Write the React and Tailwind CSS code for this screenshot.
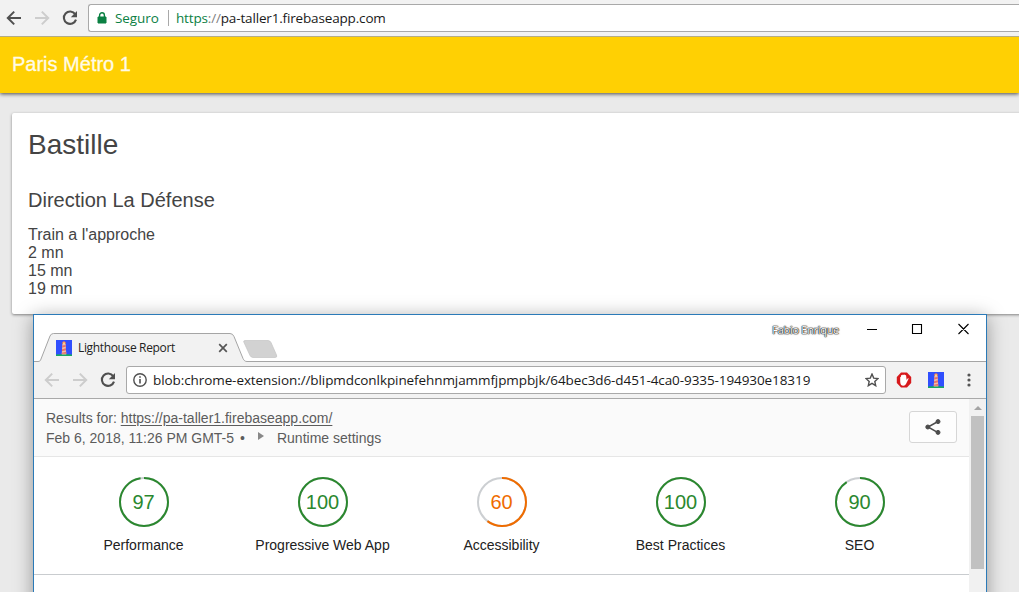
import React from "react";

function BackIcon({ className }) {
  return (
    <svg viewBox="0 0 16 16" className={"h-4 w-4 shrink-0 " + className} fill="none" stroke="currentColor" strokeWidth="2">
      <path d="M15 8H2.5M8.2 1.6L1.8 8l6.4 6.4" />
    </svg>
  );
}

function ForwardIcon({ className }) {
  return (
    <svg viewBox="0 0 16 16" className={"h-4 w-4 shrink-0 " + className} fill="none" stroke="currentColor" strokeWidth="2">
      <path d="M1 8h12.5M7.8 1.6L14.2 8l-6.4 6.4" />
    </svg>
  );
}

function ReloadIcon() {
  return (
    <svg viewBox="0 0 16 16" className="h-4 w-4 shrink-0 text-[#505050]">
      <path d="M13.2 4.1A6.2 6.2 0 1 0 14 9.6" fill="none" stroke="currentColor" strokeWidth="2.1" />
      <path d="M15 1v6.2H8.8z" fill="currentColor" />
    </svg>
  );
}

function LighthouseIcon() {
  return (
    <svg viewBox="0 0 16 16" className="h-4 w-4 shrink-0">
      <path d="M0 0h16v16H0z" fill="#304ffe" />
      <path d="M0 14.6Q8 13.4 16 14.6V16H0z" fill="#16a765" />
      <path d="M6.4 4h3.2l.7 10.4H5.7z" fill="#f0c0a8" />
      <path d="M6.3 5.6l3.4-.6.1 1.8-3.6.8zM6.1 9.2l3.8-1 .2 2-4.2 1zM5.8 12.8l4.4-1.1.2 2H5.7z" fill="#e8706a" />
      <path d="M6.2 2.2L8 1l1.8 1.2V4H6.2z" fill="#e8775c" />
      <path d="M7.1 2.4h1.8V4H7.1z" fill="#ffdf8a" />
    </svg>
  );
}

function Gauge({ score, label, color }) {
  const length = 2 * Math.PI * 24;
  return (
    <div className="flex w-[179px] flex-col items-center">
      <div className="grid h-[50px] w-[50px] place-items-center">
        <svg viewBox="0 0 50 50" className="col-start-1 row-start-1 h-[50px] w-[50px] -rotate-90" fill="none" strokeWidth="2">
          <circle cx="25" cy="25" r="24" stroke="#cccfd2" />
          <circle cx="25" cy="25" r="24" stroke={color} strokeDasharray={`${(length * score) / 100} ${length}`} />
        </svg>
        <span className="col-start-1 row-start-1 text-[20px] leading-[50px]" style={{ color }}>{score}</span>
      </div>
      <div className="mt-2 text-[14px] leading-5 text-[#212121]">{label}</div>
    </div>
  );
}

const gauges = [
  { score: 97, label: "Performance", color: "#2b882f" },
  { score: 100, label: "Progressive Web App", color: "#2b882f" },
  { score: 60, label: "Accessibility", color: "#ef6c00" },
  { score: 100, label: "Best Practices", color: "#2b882f" },
  { score: 90, label: "SEO", color: "#2b882f" },
];

function ReportWindow() {
  return (
    <section className="absolute left-[33px] top-[314px] flex h-[300px] w-[954px] flex-col border border-[#2b7ab8] bg-white shadow-[0_3px_18px_rgba(0,0,0,0.36)]">
      <div className="flex h-[47px] shrink-0 justify-between bg-white">
        <div className="grid h-[47px] w-[260px]">
          <svg viewBox="0 0 260 47" className="col-start-1 row-start-1 h-[47px] w-[260px]">
            <path d="M0 46.5H4C6 46.5 6.5 45.5 7 44L16 21Q17 18.5 19.5 18.5H196Q198.8 18.5 200 21.5L209 43.5C210 45.5 211 46.5 213 46.5H260V47H0z" fill="#f2f2f2" />
            <path d="M0 46.5H4C6 46.5 6.5 45.5 7 44L16 21Q17 18.5 19.5 18.5H196Q198.8 18.5 200 21.5L209 43.5C210 45.5 211 46.5 213 46.5H260" fill="none" stroke="#a5a5a5" />
            <path d="M211 25.5H234Q236 25.5 237 27.5L242.5 40Q243.5 42.5 241 42.5H219Q217 42.5 216 40.5L210 27.5Q209 25.5 211 25.5z" fill="#d2d2d2" stroke="#c4c4c4" strokeWidth=".7" />
          </svg>
          <div className="col-start-1 row-start-1 flex items-center pl-[22px] pt-[19px]">
            <LighthouseIcon />
            <span className="ml-[6px] w-[140px] whitespace-nowrap font-['Open_Sans','Noto_Sans',sans-serif] text-[12px] leading-4 tracking-[-0.35px] text-[#222]">Lighthouse Report</span>
            <svg viewBox="0 0 10 10" className="h-[10px] w-[10px]" stroke="#555" strokeWidth="1.7"><path d="M1.2 1.2l7.6 7.6M8.8 1.2L1.2 8.8" /></svg>
          </div>
        </div>
        <div className="flex grow justify-end border-b border-[#a5a5a5] text-black">
          <span className="mr-[28px] mt-[7px] whitespace-nowrap font-['Open_Sans','Noto_Sans',sans-serif] text-[11px] leading-4 tracking-[-0.3px] text-white [text-shadow:0_0_1px_#111,0_0_1px_#111,0_0_1px_#222,0_0_2px_#777]">Fabio Enrique</span>
          <svg viewBox="0 0 103 12" className="mr-[16px] mt-2 h-3 w-[103px]" fill="none" stroke="currentColor" strokeWidth="1.1">
            <path d="M0 6.5h10M45.5 1.5h9v9h-9zM91.5 1l10 10M101.5 1l-10 10" />
          </svg>
        </div>
      </div>
      <div className="flex h-[37px] shrink-0 items-center border-b border-[#a9a9a9] bg-[#f2f2f2] pl-[10px]">
        <BackIcon className="text-[#cdcdcd]" />
        <ForwardIcon className="ml-3 text-[#cdcdcd]" />
        <div className="ml-3"><ReloadIcon /></div>
        <div className="ml-[10px] flex h-7 w-[760px] items-center rounded-[3px] border border-[#a9a9a9] bg-white pl-[6px] pr-[6px]">
          <svg viewBox="0 0 14 14" className="h-[14px] w-[14px]" fill="none" stroke="#505050">
            <circle cx="7" cy="7" r="6.2" strokeWidth="1.4" />
            <path d="M7 6v4.5M7 3.2v1.6" strokeWidth="1.6" />
          </svg>
          <span className="ml-[6px] grow whitespace-nowrap font-['Open_Sans','Noto_Sans',sans-serif] text-[13.5px] leading-5 tracking-[-0.085px] text-[#1a1a1a]">blob:chrome-extension://blipmdconlkpinefehnmjammfjpmpbjk/64bec3d6-d451-4ca0-9335-194930e18319</span>
          <svg viewBox="0 0 14 14" className="h-[14px] w-[14px]" fill="none" stroke="#505050" strokeWidth="1.4">
            <path d="M7 1.1l1.7 4 4.3.4-3.2 2.9.9 4.3L7 10.4l-3.7 2.3.9-4.3L1 5.5l4.3-.4z" />
          </svg>
        </div>
        <svg viewBox="0 0 16 16" className="ml-[10px] h-4 w-4">
          <path d="M5 .5h6L15.2 5v6L11 15.5H5L.8 11V5z" fill="#d7191c" />
          <path d="M4.2 9.4V5.4Q4.4 4.5 5 5V3.6q.5-1 1.2-.4 .6-1 1.4-.3.8-.7 1.4.1.7-.4 1.1.5l.5 4.6 1-1.6q.8-.6 1.1 0L10 12q-.9 1.8-2.7 1.7Q4.2 13.5 4.2 9.4z" fill="#fff" />
        </svg>
        <div className="ml-4"><LighthouseIcon /></div>
        <svg viewBox="0 0 4 14" className="ml-[22.5px] h-[14px] w-1" fill="#555"><circle cx="2" cy="2" r="1.6" /><circle cx="2" cy="7" r="1.6" /><circle cx="2" cy="12" r="1.6" /></svg>
      </div>
      <div className="flex min-h-0 grow">
        <div className="w-[935px] font-['Liberation_Sans',Arial,sans-serif]">
          <header className="flex h-[58px] justify-between border-b border-[#e6e6e6] bg-[#fafafa] pl-3 pr-3 text-[14px] leading-5 text-[#5c5c5c]">
            <div className="pt-[9px]">
              <div>Results for: <span className="underline underline-offset-2">https://pa-taller1.firebaseapp.com/</span></div>
              <div className="flex">
                <span>Feb 6, 2018, 11:26 PM GMT-5</span>
                <span className="ml-[6px]">•</span>
                <svg viewBox="0 0 6 8" className="ml-[13px] mt-1 h-2 w-[6px]" fill="#888"><path d="M0 0l6 4-6 4z" /></svg>
                <span className="ml-[13px]">Runtime settings</span>
              </div>
            </div>
            <div className="mt-3 flex h-8 w-12 items-center justify-center rounded-[3px] border border-[#d6d6d6] bg-[#fdfdfd]">
              <svg viewBox="0 0 16 16" className="h-4 w-4" fill="#4c4c4c" stroke="#4c4c4c">
                <path d="M13 2.5L3 8l10 5.6" fill="none" strokeWidth="1.5" />
                <circle cx="13" cy="2.6" r="2" /><circle cx="2.8" cy="8" r="2" /><circle cx="13" cy="13.4" r="2" />
              </svg>
            </div>
          </header>
          <div className="flex h-[118px] border-b border-[#c9cccf] px-5 pt-5">
            {gauges.map((g) => <Gauge key={g.label} {...g} />)}
          </div>
        </div>
        <div className="flex w-[17px] flex-col items-center bg-[#f1f1f1]">
          <svg viewBox="0 0 8 4" className="mt-[7px] h-1 w-2" fill="#a3a3a3"><path d="M4 0l4 4H0z" /></svg>
          <div className="mt-[6px] h-[153px] w-[13px] bg-[#c1c1c1]" />
        </div>
      </div>
    </section>
  );
}

export default function App() {
  return (
    <div className="relative flex h-[592px] w-[1019px] flex-col overflow-hidden bg-[#eaeaea] font-['Liberation_Sans',Arial,sans-serif]">
      <div className="flex h-[37px] shrink-0 items-center border-b border-[#b4ac85] bg-[#f2f2f2] pl-[6px]">
        <BackIcon className="text-[#505050]" />
        <ForwardIcon className="ml-3 text-[#cdcdcd]" />
        <div className="ml-3"><ReloadIcon /></div>
        <div className="ml-[10px] flex h-7 grow items-center rounded-l-[3px] border border-r-0 border-[#a9a9a9] bg-white pl-2 font-['Open_Sans','Noto_Sans',sans-serif] text-[13.5px] leading-5">
          <svg viewBox="0 0 10 12" className="h-3 w-[10px]"><path d="M1 5h8v6H1z" fill="#0b8043" stroke="#0b8043" strokeWidth="1" /><path d="M2.6 5V3.2a2.4 2.4 0 0 1 4.8 0V5" fill="none" stroke="#0b8043" strokeWidth="1.4" /></svg>
          <span className="ml-2 w-[45px] whitespace-nowrap tracking-[-0.08px] text-[#0b8043]">Seguro</span>
          <span className="ml-2 h-4 w-px bg-[#a9a9a9]" />
          <span className="ml-[7px] whitespace-nowrap tracking-[-0.16px] text-[#1a1a1a]"><span className="text-[#0b8043]">https</span><span className="text-[#808080]">://</span>pa-taller1.firebaseapp.com</span>
        </div>
      </div>
      <header className="flex h-[56px] shrink-0 items-center bg-[#ffd003] pl-3 text-[20px] text-[#fffbe6] shadow-[0_1px_4px_rgba(0,0,0,0.7)] [-webkit-text-stroke:0.3px_#fffbe6] [clip-path:inset(0_0_-12px_0)]">
        <span className="pb-[2px]">Paris Métro 1</span>
      </header>
      <main className="ml-3 mt-5 h-[201px] w-[1020px] shrink-0 rounded-[2px] bg-white px-4 text-[#444] shadow-[0_1px_3px_rgba(0,0,0,0.45)]">
        <h1 className="pt-4 text-[28px] leading-8">Bastille</h1>
        <h2 className="mt-[27px] text-[20px] leading-6">Direction La Défense</h2>
        <div className="mt-[14px] text-[16px] leading-[18px]">
          <div>Train a l'approche</div>
          <div>2 mn</div>
          <div>15 mn</div>
          <div>19 mn</div>
        </div>
      </main>
      <ReportWindow />
    </div>
  );
}
